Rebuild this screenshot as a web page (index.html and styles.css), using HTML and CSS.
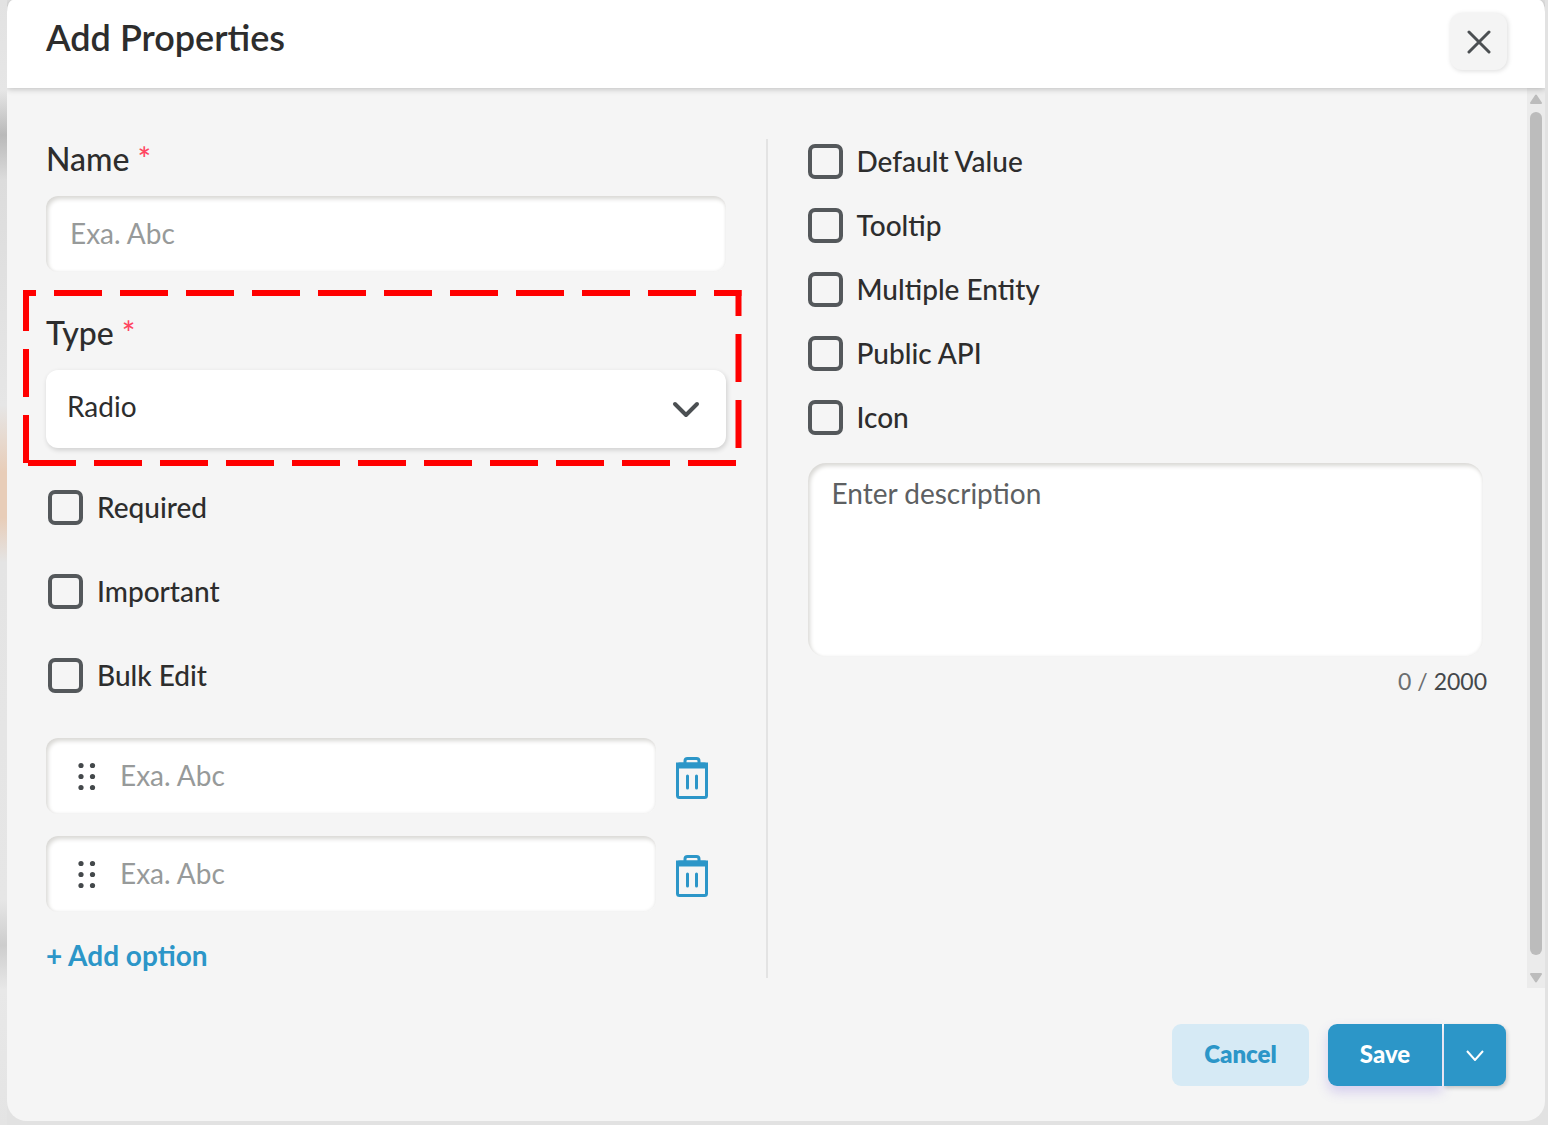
FILE: index.html
```html
<!DOCTYPE html>
<html lang="en">
<head>
<meta charset="utf-8">
<meta name="viewport" content="width=device-width, initial-scale=1">
<title>Add Properties</title>
<link rel="stylesheet" href="styles.css">
</head>
<body>
<form class="modal">
  <header class="modal-header">
    <h1 class="title">Add Properties</h1>
    <button class="close" type="button" aria-label="Close">
      <svg width="24" height="24" viewBox="0 0 24 24"><path d="M2 2L22 22M22 2L2 22"/></svg>
    </button>
  </header>

  <div class="modal-body">
    <div class="columns">
      <section class="left">
        <div class="field">
          <label class="label" for="name">Name <span class="star">*</span></label>
          <input class="input" id="name" type="text" placeholder="Exa. Abc">
        </div>

        <div class="field highlighted">
          <label class="label" for="type">Type <span class="star">*</span></label>
          <div class="select-wrap">
            <select class="select" id="type"><option>Radio</option></select>
            <svg class="select-arrow" width="28" height="18" viewBox="0 0 28 18"><path d="M3 4L14 15L25 4"/></svg>
          </div>
          <svg class="highlight" aria-hidden="true">
            <line x1="0" y1="3" x2="100%" y2="3" stroke-dashoffset="35"/>
            <line x1="0" y1="3" x2="0" y2="100%" stroke-dashoffset="10" class="edge-left"/>
            <line x1="100%" y1="0" x2="100%" y2="100%" stroke-dashoffset="22" class="edge-right"/>
            <line x1="5" y1="100%" x2="100%" y2="100%" class="edge-bottom"/>
          </svg>
        </div>

        <div class="flags">
          <label class="check"><input type="checkbox">Required</label>
          <label class="check"><input type="checkbox">Important</label>
          <label class="check"><input type="checkbox">Bulk Edit</label>
        </div>

        <div class="options">
          <div class="option">
            <div class="option-box">
              <svg class="grip" width="20" height="30" viewBox="0 0 20 30"><circle cx="4" cy="4.500" r="2.600"/><circle cx="15.500" cy="4.500" r="2.600"/><circle cx="4" cy="15.500" r="2.600"/><circle cx="15.500" cy="15.500" r="2.600"/><circle cx="4" cy="26.500" r="2.600"/><circle cx="15.500" cy="26.500" r="2.600"/></svg>
              <input class="option-input" type="text" placeholder="Exa. Abc" aria-label="Option 1">
            </div>
            <button class="trash" type="button" aria-label="Delete option 1">
              <svg width="32" height="42" viewBox="0 0 32 42"><path d="M9 7V4Q9 1.500 11.500 1.500H20.500Q23 1.500 23 4V7"/><rect x="1.500" y="7" width="29" height="33.500" rx="2"/><path class="lid" d="M0 5.500H32V11.500H0Z"/><path d="M11.500 19V31M20.500 19V31" stroke-linecap="round"/></svg>
            </button>
          </div>
          <div class="option">
            <div class="option-box">
              <svg class="grip" width="20" height="30" viewBox="0 0 20 30"><circle cx="4" cy="4.500" r="2.600"/><circle cx="15.500" cy="4.500" r="2.600"/><circle cx="4" cy="15.500" r="2.600"/><circle cx="15.500" cy="15.500" r="2.600"/><circle cx="4" cy="26.500" r="2.600"/><circle cx="15.500" cy="26.500" r="2.600"/></svg>
              <input class="option-input" type="text" placeholder="Exa. Abc" aria-label="Option 2">
            </div>
            <button class="trash" type="button" aria-label="Delete option 2">
              <svg width="32" height="42" viewBox="0 0 32 42"><path d="M9 7V4Q9 1.500 11.500 1.500H20.500Q23 1.500 23 4V7"/><rect x="1.500" y="7" width="29" height="33.500" rx="2"/><path class="lid" d="M0 5.500H32V11.500H0Z"/><path d="M11.500 19V31M20.500 19V31" stroke-linecap="round"/></svg>
            </button>
          </div>
        </div>
        <button class="add" type="button">+ Add option</button>
      </section>

      <section class="right">
        <div class="settings">
          <label class="check"><input type="checkbox">Default Value</label>
          <label class="check"><input type="checkbox">Tooltip</label>
          <label class="check"><input type="checkbox">Multiple Entity</label>
          <label class="check"><input type="checkbox">Public API</label>
          <label class="check"><input type="checkbox">Icon</label>
        </div>
        <textarea class="description" placeholder="Enter description" aria-label="Description" maxlength="2000"></textarea>
        <p class="counter">0 / <span class="limit">2000</span></p>
      </section>
    </div>

    <div class="scrollbar" aria-hidden="true">
      <svg width="12" height="10" viewBox="0 0 12 10"><path d="M6 1.500L11 9H1Z"/></svg>
      <div class="thumb"></div>
      <svg width="12" height="10" viewBox="0 0 12 10"><path d="M1 1H11L6 8.500Z"/></svg>
    </div>
  </div>

  <footer class="modal-footer">
    <button class="cancel" type="button">Cancel</button>
    <div class="save-group">
      <button class="save" type="submit">Save</button>
      <button class="save-more" type="button" aria-label="More save options">
        <svg width="18" height="12" viewBox="0 0 18 12"><path d="M1 2L9 11L17 2"/></svg>
      </button>
    </div>
  </footer>
</form>
</body>
</html>
```
FILE: styles.css
```css
* { box-sizing: border-box; }

body {
  margin: 0;
  min-height: 100vh;
  padding: 0 3px 4px 7px;
  display: flex;
  background: linear-gradient(#e2e2e2 0%, #e6e6e6 8%, #b9b9b9 12%, #dcdcdc 16%, #e6e6e6 36%, #e8cdb8 42%, #e8cdb8 46%, #e4e4e4 50%, #e6e6e6 80%, #cdcdcd 84%, #e8e8e8 88%, #e4e4e4 100%) left / 7px 100% no-repeat, #e2e2e2;
  font-family: Lato, "Liberation Sans", sans-serif;
  color: #2d2d2d;
}

button, input, select, textarea { font: inherit; color: inherit; }
button { border: 0; padding: 0; background: none; cursor: pointer; }
svg { display: block; fill: none; }

.modal {
  flex: 1;
  display: flex;
  flex-direction: column;
  background: #f5f5f5;
  border-radius: 6px 6px 20px 20px / 12px 12px 20px 20px;
}

.modal-header {
  position: relative;
  display: flex;
  justify-content: space-between;
  align-items: flex-start;
  height: 88px;
  padding: 13px 38px 0 39px;
  background: #fff;
  border-radius: 6px 6px 0 0 / 12px 12px 0 0;
  box-shadow: 0 1px 6px rgba(0, 0, 0, .24);
  clip-path: inset(0 0 -10px 0);
}
.title { margin: 0; font-size: 36px; line-height: 48px; font-weight: 600; }
.close {
  display: grid;
  place-items: center;
  width: 57px;
  height: 57px;
  border-radius: 12px;
  background: #f4f4f4;
  box-shadow: 1px 1px 5px rgba(0, 0, 0, .14);
}
.close svg { stroke: #4b4f52; stroke-width: 3; stroke-linecap: round; }

.modal-body { flex: 1; display: flex; }
.columns {
  flex: 1;
  display: grid;
  grid-template-columns: 19fr 20fr;
  padding: 51px 0 10px 39px;
}
.left {
  display: flex;
  flex-direction: column;
  padding: 0 40px 4px 0;
  border-right: 2px solid #e3e3e3;
}
.right { padding: 4px 44px 0 40px; }

.field { display: flex; flex-direction: column; gap: 17px; margin-bottom: 41px; }
.label { font-size: 32px; line-height: 40px; font-weight: 500; }
.star { color: #ff4560; }

.input, .option-box, .description {
  border: 0;
  background: #fff;
  box-shadow: inset 2px 3px 4px #d9d8d5, inset -1px -1px 3px #f1f1f1;
}
.input { width: 100%; height: 76px; padding: 0 24px 2px; border-radius: 12px; font-size: 28px; }
::placeholder { color: #979a9a; opacity: 1; }

.highlighted { position: relative; }
.select-wrap { display: grid; align-items: center; }
.select {
  grid-area: 1 / 1;
  width: 100%;
  height: 78px;
  padding: 0 21px 6px;
  border: 0;
  border-radius: 12px;
  appearance: none;
  background: #fff;
  box-shadow: 1px 2px 5px rgba(0, 0, 0, .16);
  font-size: 28px;
}
.select-arrow { grid-area: 1 / 1; justify-self: end; margin-right: 26px; stroke: #4b4f52; stroke-width: 4; stroke-linecap: round; stroke-linejoin: round; pointer-events: none; }
.highlight {
  position: absolute;
  top: -23px;
  left: -23px;
  width: calc(100% + 39px);
  height: calc(100% + 41px);
  stroke: #f00;
  stroke-width: 6;
  stroke-dasharray: 48 18;
  pointer-events: none;
}
.edge-left { transform: translateX(3px); }
.edge-right { transform: translateX(-3px); }
.edge-bottom { transform: translateY(-3px); }

.check { display: flex; align-items: center; gap: 14px; height: 36px; font-size: 28px; line-height: 36px; font-weight: 500; }
.check input {
  appearance: none;
  width: 35px;
  height: 35px;
  margin: 0;
  border: 4px solid #54585b;
  border-radius: 7px;
}
.flags { display: flex; flex-direction: column; gap: 48px; margin: 0 0 45px 2px; }
.settings { display: flex; flex-direction: column; gap: 28px; margin-bottom: 28px; }

.options { display: flex; flex-direction: column; gap: 22px; margin-bottom: 25px; }
.option { display: flex; align-items: center; gap: 20px; padding-right: 18px; }
.option-box { flex: 1; display: flex; align-items: center; height: 76px; padding-left: 31px; gap: 23px; border-radius: 12px; }
.option-input { flex: 1; min-width: 0; height: 76px; padding: 0 0 2px; border: 0; background: none; font-size: 28px; }
.grip { fill: #44484b; }
.trash { padding-top: 4px; }
.trash svg { stroke: #2c96c8; stroke-width: 3; }
.trash .lid { fill: #2c96c8; stroke: none; }
.add { align-self: flex-start; color: #2c96c8; font-size: 28px; line-height: 36px; font-weight: 700; }

.description { display: block; width: 100%; height: 194px; padding: 12px 24px; border-radius: 18px; resize: none; font-size: 28px; line-height: 36px; }
.description::placeholder { color: #5d6062; }
.counter { margin: 11px -4px 0 0; text-align: right; font-size: 23px; line-height: 26px; color: #6b6e70; }
.limit { color: #44484b; }

.scrollbar { display: flex; flex-direction: column; align-items: center; gap: 8px; width: 18px; padding: 6px 0 5px; background: #ebebeb; }
.scrollbar svg { fill: #bcbcbc; stroke: #bcbcbc; stroke-width: 2; stroke-linejoin: round; }
.thumb { width: 12px; flex: 1; margin-bottom: 10px; border-radius: 6px; background: #bcbcbc; }

.modal-footer { display: flex; justify-content: flex-end; gap: 19px; padding: 36px 39px 35px; }
.cancel, .save { height: 62px; padding-bottom: 3px; font-size: 24px; font-weight: 800; }
.cancel { width: 137px; border-radius: 9px; background: #d6eaf5; color: #2c96c8; }
.save-group { display: flex; gap: 2px; }
.save { width: 114px; border-radius: 9px 0 0 9px; background: #2c96c8; color: #fff; font-weight: 900; box-shadow: 0 6px 12px rgba(120, 90, 220, .25), 2px 0 0 #fff; }
.save-more { display: grid; place-items: center; width: 62px; height: 62px; border-radius: 0 9px 9px 0; background: #2c96c8; box-shadow: 1px 2px 4px rgba(0, 0, 0, .2); }
.save-more svg { stroke: #fff; stroke-width: 2; }
```
